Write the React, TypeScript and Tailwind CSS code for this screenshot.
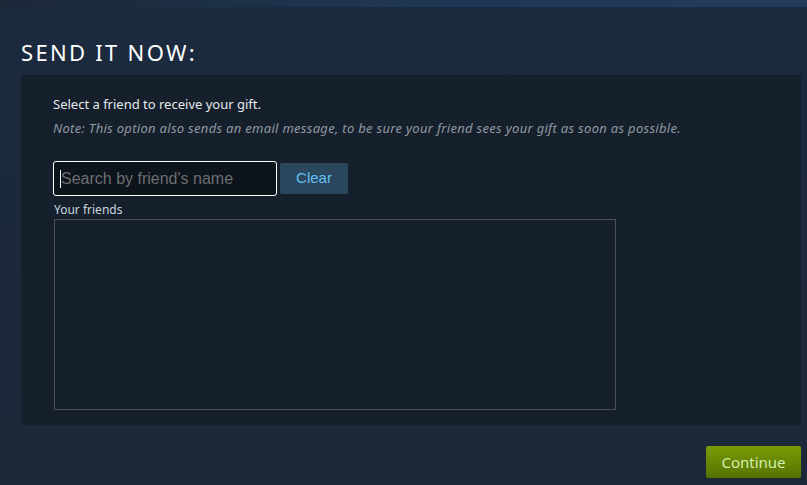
import { useState } from 'react';

export default function App() {
  const [query, setQuery] = useState('');

  return (
    <div className="w-[807px] h-[485px] overflow-hidden bg-[#1b2838] flex flex-col" style={{ fontFamily: '"Noto Sans", "Open Sans", sans-serif' }}>
      <div className="h-[7px] shrink-0 bg-gradient-to-r from-[#1b2838] via-[#1f3653] to-[#223d5c]" />
      <div className="pl-[21px] pr-[6px] flex flex-col flex-1 bg-gradient-to-b from-[#1c2a3f] to-[#1b2838]">
        <h2 className="pt-[31px] pb-[8px] text-[22px] leading-[29px] tracking-[2.3px] text-white font-normal uppercase">
          Send it now:
        </h2>

        <div className="bg-[#16202d] pl-[32px] pr-[20px] pt-[20px] pb-[15px]">
          <p className="text-[13px] leading-[18px] text-[#e5e9ec]">Select a friend to receive your gift.</p>
          <p className="mt-[6px] text-[13px] leading-[18px] italic tracking-[0.3px] text-[#8f98a0]">
            Note: This option also sends an email message, to be sure your friend sees your gift as soon as possible.
          </p>

          <div className="mt-[24px] flex items-center gap-[3px]">
            <div className="relative w-[224px] h-[35px]">
              <input
                value={query}
                onChange={(e) => setQuery(e.target.value)}
                placeholder="Search by friend's name"
                className="w-full h-full rounded-[3px] border border-white bg-[#0e141b] pl-[7px] text-[16px] text-white placeholder:text-[#6b6e72] outline-none"
                style={{ fontFamily: '"Liberation Sans", Arial, sans-serif' }}
              />
              {query === '' && <span className="absolute left-[7px] top-[9px] w-px h-[18px] bg-white" />}
            </div>
            <button
              className="w-[68px] h-[31px] rounded-[2px] bg-[#2a475e] text-[15px] text-[#66c0f4]"
              style={{ fontFamily: '"Liberation Sans", Arial, sans-serif' }}
            >
              Clear
            </button>
          </div>

          <div className="mt-[5px] pl-px text-[12px] leading-[18px] text-[#c6d4df]">Your friends</div>
          <div className="w-[562px] h-[191px] border border-[#4b5158] ml-px" />
        </div>

        <div className="flex justify-end mt-[21px]">
          <button className="w-[95px] h-[32px] rounded-[2px] bg-gradient-to-b from-[#7a9b05] to-[#567203] text-[15px] text-[#d2efa9]">
            Continue
          </button>
        </div>
      </div>
    </div>
  );
}
